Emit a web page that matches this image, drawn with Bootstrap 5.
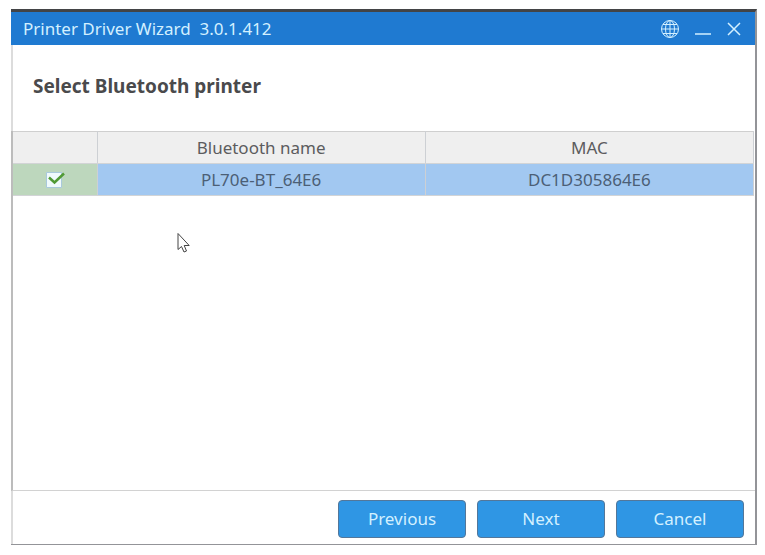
<!DOCTYPE html>
<html lang="en">
<head>
<meta charset="utf-8">
<meta name="viewport" content="width=device-width, initial-scale=1">
<title>Printer Driver Wizard</title>
<link href="https://cdn.jsdelivr.net/npm/bootstrap@5.3.0/dist/css/bootstrap.min.css" rel="stylesheet">
<style>
  body { font-family: "Noto Sans", "Open Sans", sans-serif; font-size: 17px; line-height: 24px; color: #4a4a4c; background: #fff; padding: 9px 8px 10px 11px; }
  .wizard { min-height: calc(100vh - 19px); border-top: 3px solid #434446; border-right: 2px solid #939498; border-bottom: 1px solid #939498; }
  .titlebar { background: #1f7ad1; color: #d3f0ff; height: 33px; padding: 0 14px 0 12px; }
  .titlebar h1 { font-size: 17px; line-height: 24px; }
  .tool { color: inherit; line-height: 0; }
  .heading { border-left: 2px solid #dcdcdc; padding: 29px 20px 32px; }
  .heading h2 { font-size: 19px; line-height: 25px; }
  .list-area { border-left: 2px solid #bcbcbc; border-bottom: 1px solid #d2d2d2; padding-right: 1px; }
  .devices { table-layout: fixed; color: inherit; border-top: 1px solid #cfcfcf; }
  .devices th, .devices td { height: 32px; padding: 0; border-right: 1px solid #cdd0d4; border-bottom: 1px solid #d2d4d6; }
  .devices th { background: #efefef; color: #5c5c5e; font-weight: 400; }
  .devices td { background: #a2c8f1; color: #4c5f76; }
  .devices td.pick { background: #bdd7bd; }
  .pick-col { width: 84px; }
  .pick input { appearance: none; width: 20px; height: 18px; border: 0; background: url("data:image/svg+xml,%3Csvg xmlns='http://www.w3.org/2000/svg' viewBox='0 0 20 18'%3E%3Cpath fill='%23f0fafc' stroke='%23a9c9dc' d='M1.5 1.5h15v15h-15z'/%3E%3C/svg%3E"); }
  .pick input:checked { background-image: url("data:image/svg+xml,%3Csvg xmlns='http://www.w3.org/2000/svg' viewBox='0 0 20 18'%3E%3Cpath fill='%23f0fafc' stroke='%23a9c9dc' d='M1.5 1.5h15v15h-15z'/%3E%3Cpath fill='none' stroke='%23519a35' stroke-width='2.5' d='M4 6.5l5.5 5L19 2.5'/%3E%3C/svg%3E"); }
  .actions { border-left: 2px solid #dcdcdc; padding: 9px 11px 6px; gap: 11px; }
  .step { width: 128px; height: 38px; padding: 0; font-size: 17px; line-height: 24px; border-radius: 4px; --bs-btn-bg: #2f96e4; --bs-btn-border-color: #53779a; --bs-btn-color: #d3f0ff; }
  .pointer { left: 177px; top: 232px; }
</style>
</head>
<body>
<main class="wizard d-flex flex-column">
  <header class="titlebar d-flex align-items-center">
    <h1 class="fw-normal m-0 me-auto">Printer Driver Wizard&nbsp; 3.0.1.412</h1>
    <div class="d-flex align-items-center gap-3">
      <button type="button" class="tool border-0 bg-transparent p-0" aria-label="Language">
        <svg width="18" height="20" viewBox="0 0 18 20" fill="none" stroke="currentColor" stroke-width="1"><circle cx="9" cy="10" r="8.5"/><ellipse cx="9" cy="10" rx="4.5" ry="8.5"/><path d="M9 1.5v17M.5 10h17M2 5.5h14M2 14.5h14"/></svg>
      </button>
      <button type="button" class="tool border-0 bg-transparent p-0" aria-label="Minimize">
        <svg width="16" height="20" viewBox="0 0 16 20" stroke="currentColor" stroke-width="1.5"><path d="M0 15h16"/></svg>
      </button>
      <button type="button" class="tool border-0 bg-transparent p-0" aria-label="Close">
        <svg width="14" height="20" viewBox="0 0 14 20" stroke="currentColor" stroke-width="1.5"><path d="M1 4l12 12M13 4L1 16"/></svg>
      </button>
    </div>
  </header>
  <div class="heading"><h2 class="fw-bold m-0">Select Bluetooth printer</h2></div>
  <div class="list-area flex-grow-1">
    <table class="devices w-100 text-center align-middle">
      <colgroup><col class="pick-col"><col><col></colgroup>
      <thead><tr><th></th><th scope="col">Bluetooth name</th><th scope="col">MAC</th></tr></thead>
      <tbody><tr>
        <td class="pick"><input type="checkbox" class="d-block mx-auto" aria-label="PL70e-BT_64E6" checked></td>
        <td>PL70e-BT_64E6</td><td>DC1D305864E6</td>
      </tr></tbody>
    </table>
  </div>
  <footer class="actions d-flex justify-content-end">
    <button type="button" class="btn btn-primary step">Previous</button>
    <button type="button" class="btn btn-primary step">Next</button>
    <button type="button" class="btn btn-primary step">Cancel</button>
  </footer>
</main>
<svg class="pointer position-absolute" width="14" height="22" viewBox="0 0 14 22" aria-hidden="true"><path fill="#fff" stroke="#444" d="M1 1.5v16l3.5-3 2.5 5.5 2.5-1-2.3-5.5h5z"/></svg>
<script src="https://cdn.jsdelivr.net/npm/bootstrap@5.3.0/dist/js/bootstrap.bundle.min.js"></script>
</body>
</html>
